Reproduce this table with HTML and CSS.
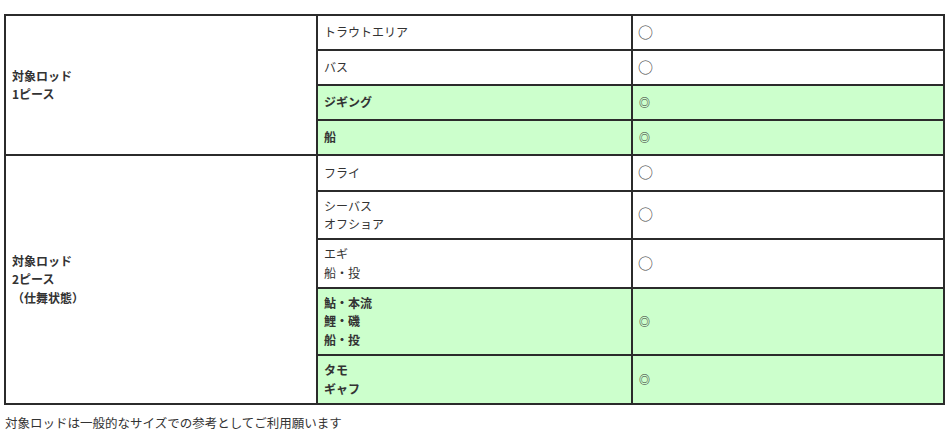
FILE: index.html
```html
<!DOCTYPE html>
<html lang="ja">
<head>
<meta charset="utf-8">
<link rel="stylesheet" href="styles.css">
</head>
<body>
<div class="wrap">
<table class="spec">
  <colgroup>
    <col class="c1">
    <col class="c2">
    <col class="c3">
  </colgroup>
  <tbody>
    <tr class="r1">
      <th class="group" rowspan="4">対象ロッド<br>1ピース</th>
      <td class="name">トラウトエリア</td>
      <td class="mark"><span class="o">○</span></td>
    </tr>
    <tr class="r1">
      <td class="name">バス</td>
      <td class="mark"><span class="o">○</span></td>
    </tr>
    <tr class="r1 hi">
      <td class="name">ジギング</td>
      <td class="mark"><span class="dbl">◎</span></td>
    </tr>
    <tr class="r1 hi">
      <td class="name">船</td>
      <td class="mark"><span class="dbl">◎</span></td>
    </tr>
    <tr class="r1b">
      <th class="group" rowspan="5">対象ロッド<br>2ピース<br>（仕舞状態）</th>
      <td class="name">フライ</td>
      <td class="mark"><span class="o">○</span></td>
    </tr>
    <tr class="r2">
      <td class="name">シーバス<br>オフショア</td>
      <td class="mark"><span class="o">○</span></td>
    </tr>
    <tr class="r2b">
      <td class="name">エギ<br>船・投</td>
      <td class="mark"><span class="o">○</span></td>
    </tr>
    <tr class="r3 hi">
      <td class="name">鮎・本流<br>鯉・磯<br>船・投</td>
      <td class="mark"><span class="dbl">◎</span></td>
    </tr>
    <tr class="r2b hi">
      <td class="name">タモ<br>ギャフ</td>
      <td class="mark"><span class="dbl">◎</span></td>
    </tr>
  </tbody>
</table>
<p class="note">対象ロッドは一般的なサイズでの参考としてご利用願います</p>
</div>
</body>
</html>
```
FILE: styles.css
```css
html, body {
  margin: 0;
  padding: 0;
  background: #ffffff;
}
body {
  font-family: "Noto Sans CJK JP", "Noto Sans", sans-serif;
  font-size: 12px;
  color: #333333;
}
.wrap {
  padding: 14px 4px 0 4px;
}
.spec {
  border-collapse: collapse;
  width: 941px;
  table-layout: fixed;
  border: 2px solid #2b2b2b;
}
.c1 { width: 312px; }
.c2 { width: 315px; }
.c3 { width: 312px; }
.spec th, .spec td {
  border: 2px solid #2b2b2b;
  padding: 4px 6px;
  text-align: left;
  vertical-align: middle;
  line-height: 18.5px;
}
.spec th {
  font-weight: bold;
  background: #ffffff;
}
.spec td.name {
  font-weight: normal;
}
.spec td.mark {
  padding-left: 5px;
}
.spec tr.hi td {
  background: #ccffcc;
  font-weight: bold;
}
.r1 { height: 35px; }
.r1b { height: 36px; }
.r2 { height: 48px; }
.r2b { height: 49px; }
.r3 { height: 67px; }
.o {
  font-size: 15px;
  font-weight: normal;
  color: #444;
}
.dbl {
  display: inline-block;
  margin-left: 1px;
  font-size: 11px;
  font-weight: bold;
  color: #333;
}
.note {
  margin: 9px 0 0 1px;
  font-size: 12.5px;
  line-height: 18px;
}
```
